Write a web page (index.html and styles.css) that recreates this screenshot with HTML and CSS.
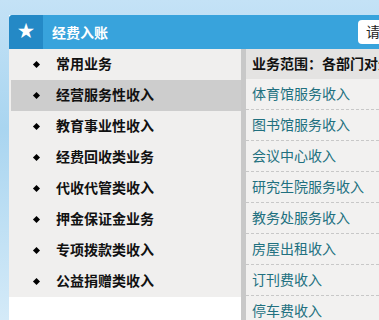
FILE: index.html
```html
<!DOCTYPE html>
<html lang="zh-CN">
<head>
<meta charset="UTF-8">
<title>经费入账</title>
<link rel="stylesheet" href="styles.css">
</head>
<body>

<div class="panel">
    <div class="panel-head">
        <span class="star">&#9733;</span>
        <span class="title">经费入账</span>
        <input class="search" type="text" placeholder="请输入">
    </div>
    <div class="panel-body">
        <ul class="menu">
            <li>常用业务</li>
            <li class="active">经营服务性收入</li>
            <li>教育事业性收入</li>
            <li>经费回收类业务</li>
            <li>代收代管类收入</li>
            <li>押金保证金业务</li>
            <li>专项拨款类收入</li>
            <li>公益捐赠类收入</li>
        </ul>
        <div class="content">
            <div class="scope">业务范围：各部门对外提供服务取得的收入</div>
            <ul class="items">
                <li>体育馆服务收入</li>
                <li>图书馆服务收入</li>
                <li>会议中心收入</li>
                <li>研究生院服务收入</li>
                <li>教务处服务收入</li>
                <li>房屋出租收入</li>
                <li>订刊费收入</li>
                <li>停车费收入</li>
            </ul>
        </div>
    </div>
</div>

</body>
</html>
```

FILE: styles.css
```css
html, body {
    height: 100%;
}
body {
    margin: 0;
    overflow: hidden;
    font-family: "Liberation Sans", "Noto Sans CJK SC", sans-serif;
    font-size: 14px;
    background: linear-gradient(180deg, #c4e2f6 0%, #a9d5f0 40%, #d4eaf8 100%);
}
.panel {
    margin: 15px 0 0 9px;
    background: #fff;
    height: 320px;
    overflow: hidden;
}
.panel-head {
    display: flex;
    align-items: center;
    height: 34px;
    background: #38a3dc;
    color: #fff;
    border-radius: 4px 0 0 0;
}
.star {
    flex: none;
    width: 34px;
    height: 34px;
    line-height: 34px;
    text-align: center;
    background: #2489c6;
    border-radius: 4px 0 0 0;
    font-size: 17px;
}
.title {
    margin-left: 9px;
    font-weight: bold;
}
.search {
    flex: none;
    margin-left: auto;
    margin-right: -63px;
    width: 68px;
    height: 24px;
    padding: 0 8px;
    border: none;
    border-radius: 4px;
    font-family: inherit;
    font-size: 14px;
}
.search::placeholder {
    color: #222;
}
.panel-body {
    display: flex;
    align-items: flex-start;
}
.menu {
    flex: none;
    list-style: none;
    margin: 0;
    padding: 0;
    width: 232px;
    background: #f0efee;
}
.menu li {
    position: relative;
    height: 31px;
    line-height: 31px;
    padding-left: 47px;
    font-weight: bold;
    color: #111;
    white-space: nowrap;
}
.menu li::before {
    content: "";
    position: absolute;
    left: 25px;
    top: 13px;
    width: 5px;
    height: 5px;
    background: #000;
    transform: rotate(45deg);
}
.menu li.active {
    margin-left: 2px;
    padding-left: 45px;
    background: #cdcdcd;
}
.menu li.active::before {
    left: 23px;
}
.content {
    flex: 1;
    min-width: 0;
    border-left: 5px solid #c8c8c8;
    background: #f2f1f0;
    white-space: nowrap;
}
.scope {
    height: 30px;
    line-height: 30px;
    padding-left: 6px;
    font-weight: bold;
    color: #111;
    background: #e4e3e2;
}
.items {
    list-style: none;
    margin: 0;
    padding: 0;
}
.items li {
    height: 30px;
    line-height: 30px;
    padding-left: 6px;
    color: #21707f;
    border-bottom: 1px dashed #c8c8c8;
}
```
